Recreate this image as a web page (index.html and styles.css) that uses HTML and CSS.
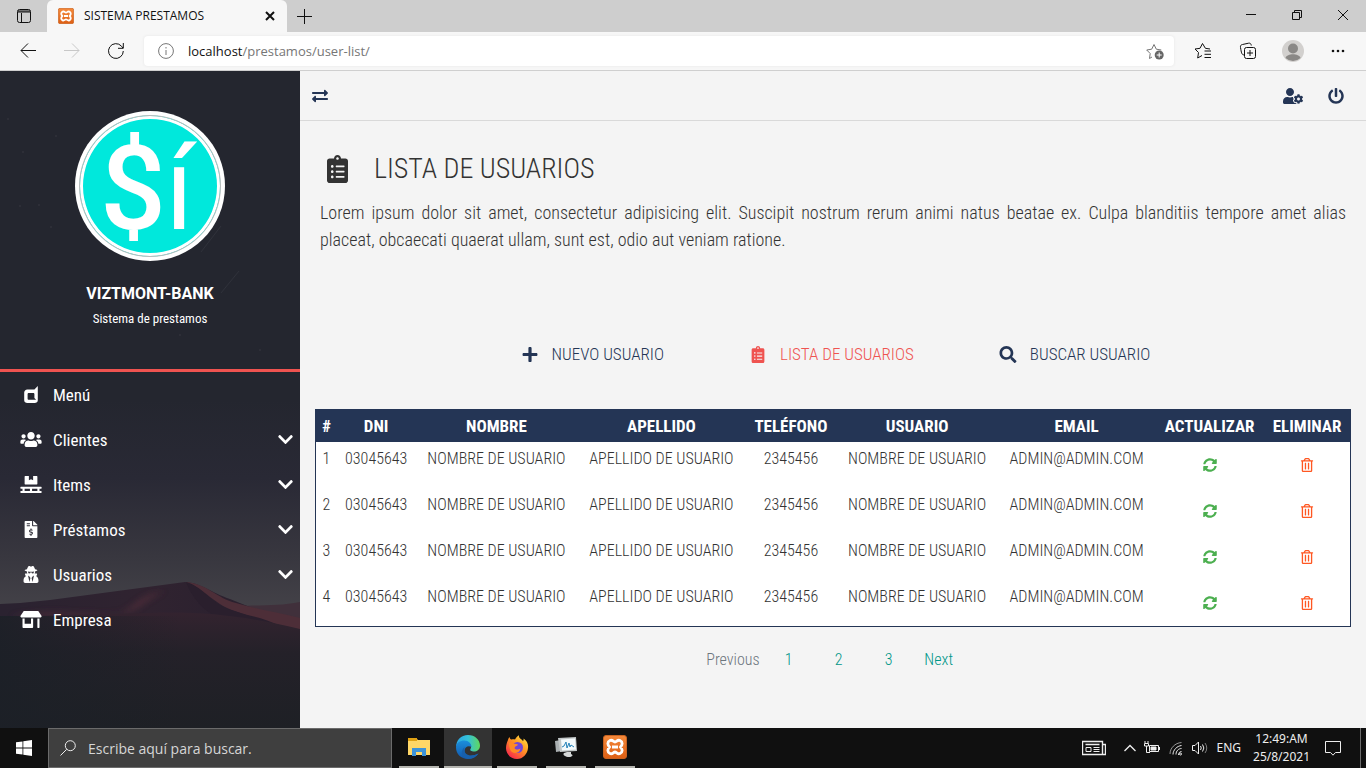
FILE: index.html
```html
<!DOCTYPE html>
<html lang="es">
<head>
<meta charset="utf-8">
<title>SISTEMA PRESTAMOS</title>
<link rel="stylesheet" href="styles.css">
</head>
<body>
<svg class="defs" aria-hidden="true">
  <defs>
    <linearGradient id="xampp-bg" x1="0" y1="0" x2="0" y2="1"><stop offset="0" stop-color="#f58a3c"/><stop offset="1" stop-color="#dd5f14"/></linearGradient>
    <linearGradient id="edge-top" x1="0" y1="0" x2="1" y2="0"><stop offset="0" stop-color="#2aa7e6"/><stop offset=".5" stop-color="#35c1d8"/><stop offset="1" stop-color="#5fd85c"/></linearGradient>
    <linearGradient id="edge-low" x1="0" y1="0" x2="0" y2="1"><stop offset="0" stop-color="#1b8fdc"/><stop offset="1" stop-color="#1257ac"/></linearGradient>
    <linearGradient id="fox" x1="1" y1="0" x2=".2" y2="1"><stop offset="0" stop-color="#fff04a"/><stop offset=".45" stop-color="#ff9a22"/><stop offset="1" stop-color="#f5214d"/></linearGradient>
    <linearGradient id="sky" x1="0" y1="0" x2="0" y2="1"><stop offset="0" stop-color="#24262f"/><stop offset=".5" stop-color="#24262f"/><stop offset=".62" stop-color="#292935"/><stop offset=".74" stop-color="#38373f"/><stop offset=".83" stop-color="#454349"/></linearGradient>
    <linearGradient id="sand" x1="0" y1="0" x2="0" y2="1"><stop offset="0" stop-color="#33232f"/><stop offset=".35" stop-color="#242129"/><stop offset="1" stop-color="#1e2025"/></linearGradient>
    <linearGradient id="sand-left" x1="0" y1="0" x2="1" y2="0"><stop offset="0" stop-color="#1c2027" stop-opacity=".9"/><stop offset=".6" stop-color="#1c2027" stop-opacity="0"/></linearGradient>
    <linearGradient id="ridge" x1="0" y1="0" x2="1" y2="0"><stop offset="0" stop-color="#2a2230"/><stop offset=".5" stop-color="#302330"/><stop offset="1" stop-color="#271f2e"/></linearGradient>
    <filter id="soft"><feGaussianBlur stdDeviation="3"/></filter>
    <symbol id="xampp" viewBox="0 0 24 24"><rect x=".5" y=".5" width="23" height="23" rx="2.5" fill="url(#xampp-bg)" stroke="#c9621f"/><path d="M7 5.500c2.500-1.200 3.400 1.500 5 1.500s2.500-2.700 5-1.500c3 1.400 2.600 4.500.4 6.500 2.200 2 2.600 5.100-.4 6.500-2.500 1.200-3.400-1.500-5-1.500s-2.500 2.700-5 1.500c-3-1.400-2.600-4.500-.4-6.500-2.200-2-2.600-5.100.4-6.500zM9 12h6" fill="none" stroke="#fff" stroke-width="2.800" stroke-linejoin="round"/></symbol>
    <symbol id="clipboard" viewBox="0 0 384 512"><path d="M336 64h-80c0-35.300-28.700-64-64-64s-64 28.700-64 64H48C21.500 64 0 85.500 0 112v352c0 26.500 21.500 48 48 48h288c26.500 0 48-21.500 48-48V112c0-26.500-21.500-48-48-48zM96 424c-13.300 0-24-10.700-24-24s10.700-24 24-24 24 10.700 24 24-10.700 24-24 24zm0-96c-13.300 0-24-10.700-24-24s10.700-24 24-24 24 10.700 24 24-10.700 24-24 24zm0-96c-13.300 0-24-10.700-24-24s10.700-24 24-24 24 10.700 24 24-10.700 24-24 24zm96-192c13.300 0 24 10.700 24 24s-10.700 24-24 24-24-10.700-24-24 10.700-24 24-24zm128 368c0 4.400-3.600 8-8 8H168c-4.400 0-8-3.600-8-8v-16c0-4.400 3.600-8 8-8h144c4.400 0 8 3.600 8 8v16zm0-96c0 4.400-3.600 8-8 8H168c-4.400 0-8-3.600-8-8v-16c0-4.400 3.600-8 8-8h144c4.400 0 8 3.600 8 8v16zm0-96c0 4.400-3.600 8-8 8H168c-4.400 0-8-3.600-8-8v-16c0-4.400 3.600-8 8-8h144c4.400 0 8 3.600 8 8v16z"/></symbol>
    <symbol id="chevron" viewBox="0 0 448 512"><path d="M207.029 381.476L12.686 187.132c-9.373-9.373-9.373-24.569 0-33.941l22.667-22.667c9.357-9.357 24.522-9.375 33.901-.04L224 284.505l154.745-154.021c9.379-9.335 24.544-9.317 33.901.04l22.667 22.667c9.373 9.373 9.373 24.569 0 33.941L240.971 381.476c-9.373 9.372-24.569 9.372-33.942 0z"/></symbol>
    <symbol id="sync" viewBox="0 0 512 512"><path d="M370.720 133.280C339.458 104.008 298.888 87.962 255.848 88c-77.458.068-144.328 53.178-162.791 126.850-1.344 5.363-6.122 9.150-11.651 9.150H24.103c-7.498 0-13.194-6.807-11.807-14.176C33.933 94.924 134.813 8 256 8c66.448 0 126.791 26.136 171.315 68.685L463.030 40.970C478.149 25.851 504 36.559 504 57.941V192c0 13.255-10.745 24-24 24H345.941c-21.382 0-32.090-25.851-16.971-40.971l41.750-41.749zM32 296h134.059c21.382 0 32.090 25.851 16.971 40.971l-41.750 41.750c31.262 29.273 71.835 45.319 114.876 45.280 77.418-.07 144.315-53.144 162.787-126.849 1.344-5.363 6.122-9.150 11.651-9.150h57.304c7.498 0 13.194 6.807 11.807 14.176C478.067 417.076 377.187 504 256 504c-66.448 0-126.791-26.136-171.315-68.685L48.970 471.030C33.851 486.149 8 475.441 8 454.059V320c0-13.255 10.745-24 24-24z"/></symbol>
    <symbol id="trash" viewBox="0 0 448 512"><path d="M268 416h24a12 12 0 0 0 12-12V188a12 12 0 0 0-12-12h-24a12 12 0 0 0-12 12v216a12 12 0 0 0 12 12zM432 80h-82.410l-34-56.700A48 48 0 0 0 274.410 0H173.590a48 48 0 0 0-41.160 23.300L98.410 80H16A16 16 0 0 0 0 96v16a16 16 0 0 0 16 16h16v336a48 48 0 0 0 48 48h288a48 48 0 0 0 48-48V128h16a16 16 0 0 0 16-16V96a16 16 0 0 0-16-16zM171.840 50.910A6 6 0 0 1 177 48h94a6 6 0 0 1 5.150 2.910L293.610 80H154.390zM368 464H80V128h288zm-212-48h24a12 12 0 0 0 12-12V188a12 12 0 0 0-12-12h-24a12 12 0 0 0-12 12v216a12 12 0 0 0 12 12z"/></symbol>
  </defs>
</svg>

<div class="browser">
  <header class="tab-strip">
    <button class="strip-btn tab-actions" aria-label="Acciones de pestañas"><svg class="i16 line" viewBox="0 0 16 16"><rect x="1.500" y="1.500" width="13" height="13" rx="2"/><path d="M2 4h12M2 3h12M5.500 5v9.500"/></svg></button>
    <div class="tab">
      <svg class="i16"><use href="#xampp"/></svg>
      <span class="tab-title">SISTEMA PRESTAMOS</span>
      <button class="tab-close" aria-label="Cerrar pestaña"><svg class="i10 line bold" viewBox="0 0 10 10"><path d="M1 1l8 8M9 1L1 9"/></svg></button>
    </div>
    <button class="strip-btn new-tab" aria-label="Nueva pestaña"><svg class="i16 line" viewBox="0 0 16 16"><path d="M8.500 1v15M1 8.500h15"/></svg></button>
    <div class="window-controls">
      <button aria-label="Minimizar"><svg class="i10 line" viewBox="0 0 10 10"><path d="M0 4.500h10"/></svg></button>
      <button aria-label="Restaurar"><svg class="i10 line" viewBox="0 0 10 10"><path d="M.5 2.500h7v7h-7zM2.500 2.500v-2h7v7h-2"/></svg></button>
      <button aria-label="Cerrar"><svg class="i10 line" viewBox="0 0 10 10"><path d="M0 0l10 10M10 0L0 10"/></svg></button>
    </div>
  </header>

  <div class="toolbar">
    <button aria-label="Atrás"><svg class="i16 line" viewBox="0 0 16 16"><path d="M16 7.500H1M8 .5L1 7.500l7 7"/></svg></button>
    <button class="disabled" aria-label="Adelante" disabled><svg class="i16 line" viewBox="0 0 16 16"><path d="M0 7.500h15M8 .5l7 7-7 7"/></svg></button>
    <button aria-label="Actualizar página"><svg class="i16 line" viewBox="0 0 16 16"><path d="M15.300 8A7.400 7.400 0 1 1 13.500 3.200L15 5M15.300 0v5.300H10"/></svg></button>
    <div class="address">
      <svg class="i16 line grey" viewBox="0 0 16 16"><circle cx="8" cy="8" r="7.400"/><path d="M8 7v5M8 4v1.500"/></svg>
      <span class="url">localhost<span>/prestamos/user-list/</span></span>
      <button aria-label="Agregar a favoritos"><svg class="i18 line grey" viewBox="0 0 18 18"><path d="M6 15l-2.500 1.500.7-5L.7 8l5-.8L8 2.500l2.300 4.700 5 .8"/><circle cx="13.200" cy="13" r="4.500" fill="#666" stroke="none"/><path d="M13.200 10.500v5M10.700 13h5" stroke="#fff"/></svg></button>
    </div>
    <div class="tool-group">
      <button aria-label="Favoritos"><svg class="i18 line" viewBox="0 0 18 18"><path d="M16 7l-4.600-.7L8.500 1.500 6 6.300l-5 .7 3.500 3.500-.8 5.500L8 13.500M10.500 9H17M10.500 12.300H17M10.500 15.500H17"/></svg></button>
      <button aria-label="Colecciones"><svg class="i18 line" viewBox="0 0 18 18"><path d="M5 13C2.500 12.500 2.500 11 1.500 5.500 1.200 3.500 2 2.800 3.500 2.500L9.500 1.200c1.500-.3 2.500.3 2.800 2.300"/><rect x="5.500" y="5.500" width="11" height="11" rx="2"/><path d="M11 8v6M8 11h6"/></svg></button>
      <button aria-label="Perfil"><svg class="i22" viewBox="0 0 22 22"><circle cx="11" cy="11" r="11" fill="#d2d0ce"/><circle cx="11" cy="8.500" r="5" fill="#8a8886"/><path d="M3.500 18c1.500-5 13.500-5 15 0A11 11 0 0 1 3.500 18z" fill="#8a8886"/></svg></button>
      <button aria-label="Configuración y más"><svg class="i16" viewBox="0 0 16 16"><circle cx="3" cy="8" r="1.300"/><circle cx="8" cy="8" r="1.300"/><circle cx="13" cy="8" r="1.300"/></svg></button>
    </div>
  </div>

  <div class="page">
    <aside class="sidebar">
      <svg class="desert" viewBox="0 0 300 657" preserveAspectRatio="none" aria-hidden="true">
        <rect width="300" height="657" fill="url(#sky)"/>
        <path d="M201 181l20-26M221 222l18-22" stroke="#30323b"/>
        <g fill="#30323b"><circle cx="8" cy="48" r="1"/><circle cx="56" cy="65" r="1"/><circle cx="23" cy="81" r="1"/><circle cx="20" cy="135" r="1"/><circle cx="39" cy="134" r="1"/><circle cx="51" cy="156" r="1"/><circle cx="180" cy="264" r="1"/><circle cx="260" cy="279" r="1"/></g>
        <path d="M240 535c25-1 40 0 60-4v30h-60z" fill="#40303b"/>
        <path d="M0 533l20-1 30-3 90-12 45-6c16 1 25 10 45 17l30 12 40 10v20H0z" fill="url(#ridge)"/>
        <path d="M186 511c22 2 30 16 50 21 20 6 40 9 64 15v12c-25-5-45-12-65-19-20-6-30-22-49-29z" fill="#4d2e38"/>
        <path d="M186 511c16 4 24 20 42 27 15 6 35 8 52 17l-60-8c-16-6-28-20-34-36z" fill="#2a1f2d"/>
        <path d="M10 546c40-10 80 0 110-4 15-5 17-18 45-22-20 8-20 16-40 22-35 6-80 2-115 4z" fill="#5a303c" opacity=".7" filter="url(#soft)"/>
        <path d="M0 547c50-3 100-4 150-5 55-2 100 4 150 16v99H0z" fill="url(#sand)"/>
        <path d="M0 545h300v112H0z" fill="url(#sand-left)"/>
      </svg>
      <div class="profile">
        <div class="avatar"><div class="avatar-disc">$<span>í</span></div></div>
        <p class="brand">VIZTMONT-BANK</p>
        <p class="tagline">Sistema de prestamos</p>
      </div>
      <nav class="menu">
        <a href="#"><svg class="menu-icon" viewBox="0 0 448 512"><path d="M326.600 104H110.400c-51.100 0-91.200 43.300-91.200 93.500V427c0 50.500 40.100 85 91.200 85h227.200c51.100 0 91.200-34.500 91.200-85V0L326.600 104zM153.900 416.500c-17.700 0-32.400-15.100-32.400-32.800V240.800c0-17.700 14.700-32.500 32.400-32.500h140.700c17.700 0 32 14.800 32 32.500v123.500l51.100 52.300H153.900z"/></svg><span>Menú</span></a>
        <a href="#"><svg class="menu-icon" viewBox="0 0 640 512"><path d="M96 224c35.300 0 64-28.700 64-64s-28.700-64-64-64-64 28.700-64 64 28.700 64 64 64zm448 0c35.300 0 64-28.700 64-64s-28.700-64-64-64-64 28.700-64 64 28.700 64 64 64zm32 32h-64c-17.600 0-33.500 7.100-45.100 18.600 40.300 22.100 68.900 62 75.100 109.400h66c17.700 0 32-14.300 32-32v-32c0-35.300-28.700-64-64-64zm-256 0c61.900 0 112-50.100 112-112S381.900 32 320 32 208 82.100 208 144s50.100 112 112 112zm76.800 32h-8.300c-20.800 10-43.900 16-68.500 16s-47.600-6-68.500-16h-8.300C179.600 288 128 339.600 128 403.200V432c0 26.500 21.500 48 48 48h288c26.500 0 48-21.500 48-48v-28.800c0-63.600-51.600-115.200-115.200-115.200zm-223.700-13.400C161.500 263.100 145.600 256 128 256H64c-35.300 0-64 28.700-64 64v32c0 17.700 14.300 32 32 32h65.900c6.300-47.400 34.900-87.300 75.200-109.400z"/></svg><span>Clientes</span><svg class="caret"><use href="#chevron"/></svg></a>
        <a href="#"><svg class="menu-icon" viewBox="0 0 640 512"><path d="M144 256h352c8.800 0 16-7.200 16-16V16c0-8.800-7.200-16-16-16H384v128l-64-32-64 32V0H144c-8.800 0-16 7.200-16 16v224c0 8.800 7.200 16 16 16zm480 128c8.800 0 16-7.200 16-16v-32c0-8.800-7.200-16-16-16H16c-8.800 0-16 7.200-16 16v32c0 8.800 7.200 16 16 16h48v64H16c-8.800 0-16 7.200-16 16v32c0 8.800 7.200 16 16 16h608c8.800 0 16-7.200 16-16v-32c0-8.800-7.200-16-16-16h-48v-64h48zm-336 64H128v-64h160v64zm224 0H352v-64h160v64z"/></svg><span>Items</span><svg class="caret"><use href="#chevron"/></svg></a>
        <a href="#"><svg class="menu-icon" viewBox="0 0 384 512"><path d="M377 105L279.100 7c-4.500-4.500-10.600-7-17-7H256v128h128v-6.100c0-6.300-2.500-12.400-7-16.900zm-153 31V0H24C10.700 0 0 10.700 0 24v464c0 13.300 10.700 24 24 24h336c13.300 0 24-10.700 24-24V160H248c-13.200 0-24-10.800-24-24zM64 72c0-4.420 3.580-8 8-8h80c4.420 0 8 3.580 8 8v16c0 4.420-3.580 8-8 8H72c-4.420 0-8-3.580-8-8V72zm0 80v-16c0-4.420 3.580-8 8-8h80c4.420 0 8 3.580 8 8v16c0 4.420-3.580 8-8 8H72c-4.420 0-8-3.580-8-8zm144 263.880V440c0 4.420-3.580 8-8 8h-16c-4.420 0-8-3.580-8-8v-24.290c-11.290-.58-22.270-4.520-31.370-11.350-3.900-2.930-4.100-8.770-.57-12.140l11.750-11.210c2.770-2.640 6.890-2.760 10.130-.73 3.870 2.420 8.260 3.720 12.820 3.720h28.110c6.500 0 11.800-5.920 11.800-13.190 0-5.950-3.610-11.190-8.770-12.730l-45-13.500c-18.590-5.580-31.580-23.420-31.580-43.390 0-24.520 19.050-44.440 42.670-45.070V232c0-4.420 3.580-8 8-8h16c4.420 0 8 3.580 8 8v24.290c11.290.58 22.270 4.510 31.370 11.350 3.900 2.930 4.100 8.770.57 12.140l-11.750 11.210c-2.770 2.640-6.890 2.760-10.130.73-3.870-2.430-8.260-3.720-12.820-3.720h-28.110c-6.500 0-11.800 5.920-11.800 13.190 0 5.950 3.610 11.190 8.770 12.730l45 13.500c18.590 5.580 31.580 23.420 31.580 43.390 0 24.530-19.050 44.440-42.670 45.070z"/></svg><span>Préstamos</span><svg class="caret"><use href="#chevron"/></svg></a>
        <a href="#"><svg class="menu-icon" viewBox="0 0 448 512"><path d="M383.900 308.300l23.900-62.600c4-10.500-3.700-21.700-15-21.700h-58.500c11-18.900 17.800-40.600 17.800-64v-.3c39.200-7.800 64-19.100 64-31.700 0-13.300-27.300-25.100-70.100-33-9.200-32.800-27-65.800-40.600-82.800-9.500-11.900-25.900-15.600-39.500-8.800l-27.600 13.800c-9 4.500-19.600 4.500-28.600 0L182.100 3.400c-13.600-6.800-30-3.100-39.500 8.800-13.500 17-31.400 50-40.600 82.800-42.700 7.900-70 19.700-70 33 0 12.600 24.800 23.900 64 31.700v.3c0 23.400 6.800 45.100 17.800 64H56.300c-11.500 0-19.200 11.700-14.700 22.300l25.800 60.200C27.300 329.800 0 372.700 0 422.400v44.800C0 491.900 20.100 512 44.800 512h358.400c24.700 0 44.800-20.100 44.800-44.800v-44.800c0-48.400-25.800-90.400-64.100-114.100zM176 480l-41.600-192 49.600 32 24 40-32 120zm96 0l-32-120 24-40 49.600-32L272 480zm41.700-298.500c-3.900 11.900-7 24.600-16.500 33.400-10.100 9.300-48 22.400-64-25-2.800-8.400-15.400-8.400-18.300 0-17 50.200-56 32.400-64 25-9.500-8.800-12.700-21.500-16.500-33.400-.8-2.500-6.300-5.700-6.300-5.800v-10.800c28.300 3.600 61 5.800 96 5.800s67.700-2.100 96-5.800v10.800c-.1.1-5.600 3.200-6.400 5.800z"/></svg><span>Usuarios</span><svg class="caret"><use href="#chevron"/></svg></a>
        <a href="#"><svg class="menu-icon" viewBox="0 0 640 512"><path d="M320 384H128V224H64v256c0 17.700 14.300 32 32 32h256c17.700 0 32-14.300 32-32V224h-64v160zm314.600-241.800l-85.300-128c-6-8.900-16-14.200-26.700-14.200H117.400c-10.700 0-20.700 5.300-26.600 14.200l-85.300 128c-14.200 21.300 1 49.800 26.600 49.800H608c25.500 0 40.700-28.500 26.600-49.800zM512 496c0 8.800 7.200 16 16 16h32c8.800 0 16-7.200 16-16V224h-64v272z"/></svg><span>Empresa</span></a>
      </nav>
    </aside>

    <main class="content">
      <div class="topbar">
        <button aria-label="Mostrar u ocultar menú"><svg class="i16" viewBox="0 0 512 512"><path d="M0 168v-16c0-13.255 10.745-24 24-24h360V80c0-21.367 25.899-32.042 40.971-16.971l80 80c9.372 9.373 9.372 24.569 0 33.941l-80 80C409.956 271.982 384 261.456 384 240v-48H24c-13.255 0-24-10.745-24-24zm488 152H128v-48c0-21.314-25.862-32.080-40.971-16.971l-80 80c-9.372 9.373-9.372 24.569 0 33.941l80 80C102.057 463.997 128 453.437 128 432v-48h360c13.255 0 24-10.745 24-24v-16c0-13.255-10.745-24-24-24z"/></svg></button>
        <div class="topbar-right">
          <a href="#" aria-label="Mi cuenta"><svg class="wide" viewBox="0 0 640 512"><path d="M610.500 373.300c2.600-14.100 2.600-28.500 0-42.600l25.800-14.900c3-1.700 4.300-5.200 3.300-8.500-6.700-21.600-18.200-41.200-33.200-57.400-2.300-2.500-6-3.100-9-1.400l-25.800 14.900c-10.900-9.300-23.400-16.500-36.900-21.300v-29.800c0-3.400-2.400-6.400-5.700-7.100-22.300-5-45-4.800-66.200 0-3.300.7-5.700 3.700-5.700 7.100v29.800c-13.500 4.800-26 12-36.900 21.300l-25.800-14.900c-2.900-1.700-6.700-1.100-9 1.400-15 16.200-26.500 35.800-33.200 57.400-1 3.300.4 6.800 3.300 8.500l25.800 14.900c-2.600 14.100-2.600 28.500 0 42.600l-25.800 14.900c-3 1.700-4.300 5.200-3.300 8.500 6.700 21.600 18.200 41.100 33.200 57.400 2.300 2.500 6 3.100 9 1.400l25.800-14.900c10.900 9.300 23.400 16.500 36.900 21.300v29.800c0 3.400 2.400 6.400 5.700 7.100 22.300 5 45 4.800 66.200 0 3.300-.7 5.700-3.700 5.700-7.100v-29.800c13.500-4.800 26-12 36.900-21.300l25.800 14.900c2.900 1.700 6.700 1.100 9-1.400 15-16.200 26.500-35.800 33.200-57.400 1-3.300-.4-6.800-3.300-8.500l-25.800-14.900zM496 400.500c-26.800 0-48.500-21.800-48.500-48.500s21.800-48.500 48.500-48.500 48.500 21.800 48.500 48.500-21.700 48.500-48.500 48.500zM224 256c70.700 0 128-57.300 128-128S294.700 0 224 0 96 57.300 96 128s57.300 128 128 128zm201.200 226.500c-2.300-1.200-4.600-2.600-6.800-3.900l-7.900 4.600c-6 3.400-12.800 5.300-19.600 5.300-10.900 0-21.400-4.600-28.900-12.600-18.300-19.800-32.300-43.900-40.200-69.600-5.500-17.700 1.900-36.400 17.900-45.700l7.900-4.600c-.1-2.600-.1-5.200 0-7.800l-7.900-4.600c-16-9.200-23.400-28-17.900-45.700.9-2.900 2.200-5.800 3.200-8.700-3.800-.3-7.500-1.200-11.400-1.200h-16.700c-22.200 10.200-46.900 16-72.900 16s-50.600-5.800-72.900-16h-16.700C60.200 288 0 348.200 0 422.400V464c0 26.500 21.500 48 48 48h352c10.100 0 19.500-3.200 27.200-8.500-1.200-3.800-2-7.700-2-11.800v-9.200z"/></svg></a>
          <a href="#" aria-label="Salir"><svg class="i16" viewBox="0 0 512 512"><path d="M400 54.100c63 45 104 118.600 104 201.900 0 136.800-110.800 247.700-247.500 248C120 504.300 8.200 393 8 256.400 7.900 173.100 48.900 99.300 111.800 54.200c11.700-8.300 28-4.800 35 7.700L162.600 90c5.900 10.500 3.100 23.800-6.600 31-41.500 30.800-68 79.600-68 134.900-.1 92.300 74.500 168.100 168 168.100 91.600 0 168.600-74.200 168-169.100-.3-51.800-24.700-101.800-68.100-134-9.700-7.200-12.400-20.500-6.500-30.900l15.800-28.100c7-12.400 23.200-16.100 34.800-7.800zM296 264V24c0-13.300-10.700-24-24-24h-32c-13.300 0-24 10.700-24 24v240c0 13.300 10.700 24 24 24h32c13.300 0 24-10.700 24-24z"/></svg></a>
        </div>
      </div>

      <section class="intro">
        <h1><svg class="title-icon"><use href="#clipboard"/></svg><span>LISTA DE USUARIOS</span></h1>
        <p>Lorem ipsum dolor sit amet, consectetur adipisicing elit. Suscipit nostrum rerum animi natus beatae ex. Culpa blanditiis tempore amet alias placeat, obcaecati quaerat ullam, sunt est, odio aut veniam ratione.</p>
      </section>

      <nav class="page-tabs">
        <a href="#"><svg class="fw" viewBox="0 0 448 512"><path d="M416 208H272V64c0-17.670-14.330-32-32-32h-32c-17.670 0-32 14.330-32 32v144H32c-17.670 0-32 14.330-32 32v32c0 17.670 14.330 32 32 32h144v144c0 17.670 14.330 32 32 32h32c17.670 0 32-14.330 32-32V304h144c17.670 0 32-14.330 32-32v-32c0-17.670-14.330-32-32-32z"/></svg><span>NUEVO USUARIO</span></a>
        <a href="#" class="active"><svg class="fw"><use href="#clipboard"/></svg><span>LISTA DE USUARIOS</span></a>
        <a href="#"><svg class="fw" viewBox="0 0 512 512"><path d="M505 442.700L405.300 343c-4.500-4.500-10.600-7-17-7H372c27.600-35.300 44-79.700 44-128C416 93.100 322.900 0 208 0S0 93.100 0 208s93.100 208 208 208c48.300 0 92.700-16.400 128-44v16.300c0 6.400 2.500 12.500 7 17l99.700 99.700c9.400 9.400 24.600 9.400 33.900 0l28.300-28.300c9.400-9.400 9.400-24.600.1-34zM208 336c-70.700 0-128-57.200-128-128 0-70.700 57.200-128 128-128 70.700 0 128 57.200 128 128 0 70.700-57.200 128-128 128z"/></svg><span>BUSCAR USUARIO</span></a>
      </nav>

      <div class="table-wrap">
        <table>
          <thead><tr><th>#</th><th>DNI</th><th>NOMBRE</th><th>APELLIDO</th><th>TELÉFONO</th><th>USUARIO</th><th>EMAIL</th><th>ACTUALIZAR</th><th>ELIMINAR</th></tr></thead>
          <tbody>
            <tr><td>1</td><td>03045643</td><td>NOMBRE DE USUARIO</td><td>APELLIDO DE USUARIO</td><td>2345456</td><td>NOMBRE DE USUARIO</td><td>ADMIN@ADMIN.COM</td><td><a href="#" class="action update" aria-label="Actualizar"><svg><use href="#sync"/></svg></a></td><td><button class="action delete" aria-label="Eliminar"><svg><use href="#trash"/></svg></button></td></tr>
            <tr><td>2</td><td>03045643</td><td>NOMBRE DE USUARIO</td><td>APELLIDO DE USUARIO</td><td>2345456</td><td>NOMBRE DE USUARIO</td><td>ADMIN@ADMIN.COM</td><td><a href="#" class="action update" aria-label="Actualizar"><svg><use href="#sync"/></svg></a></td><td><button class="action delete" aria-label="Eliminar"><svg><use href="#trash"/></svg></button></td></tr>
            <tr><td>3</td><td>03045643</td><td>NOMBRE DE USUARIO</td><td>APELLIDO DE USUARIO</td><td>2345456</td><td>NOMBRE DE USUARIO</td><td>ADMIN@ADMIN.COM</td><td><a href="#" class="action update" aria-label="Actualizar"><svg><use href="#sync"/></svg></a></td><td><button class="action delete" aria-label="Eliminar"><svg><use href="#trash"/></svg></button></td></tr>
            <tr><td>4</td><td>03045643</td><td>NOMBRE DE USUARIO</td><td>APELLIDO DE USUARIO</td><td>2345456</td><td>NOMBRE DE USUARIO</td><td>ADMIN@ADMIN.COM</td><td><a href="#" class="action update" aria-label="Actualizar"><svg><use href="#sync"/></svg></a></td><td><button class="action delete" aria-label="Eliminar"><svg><use href="#trash"/></svg></button></td></tr>
          </tbody>
        </table>
      </div>

      <nav class="pagination" aria-label="Paginación">
        <a class="off" aria-disabled="true">Previous</a><a href="#">1</a><a href="#">2</a><a href="#">3</a><a href="#">Next</a>
      </nav>
    </main>
  </div>

  <footer class="taskbar">
    <button class="start" aria-label="Inicio"><svg class="i16" viewBox="0 0 16 16"><path fill="#fff" d="M0 2.300L6.500 1.400v6.200H0zM7.300 1.300L16 0v7.600H7.300zM0 8.400h6.500v6.200L0 13.700zM7.300 8.400H16V16l-8.700-1.300z"/></svg></button>
    <label class="search"><svg class="i16 line" viewBox="0 0 16 16"><circle cx="10.300" cy="5.700" r="5"/><path d="M6.700 9.300L.5 15.500"/></svg><input type="text" aria-label="Buscar" placeholder="Escribe aquí para buscar."></label>
    <div class="apps">
      <button aria-label="Explorador de archivos"><svg class="i24" viewBox="0 0 24 24"><path d="M1 3h8l2 2h12v15H1z" fill="#ffd767"/><path d="M1 3h9v3H1z" fill="#e0a214"/><path d="M5 21v-8h14v8h-4v-4H9v4z" fill="#3d93d8"/></svg></button>
      <button class="current" aria-label="Microsoft Edge"><svg class="i24" viewBox="0 0 24 24"><path d="M12 0c7 0 12 5 12 10.500 0 4-3 6-6 6-2.500 0-4.500-1-3.500-2.500 2-3-1-7-5.500-7C4 7 0 10 0 13 0 5 5 0 12 0z" fill="url(#edge-top)"/><path d="M0 12.500C0 8 4 5.500 8.500 5.500c4 0 7 3 7 6.500-3-2-7 0-7 4 0 4 5 7 14 2.500C20 22 16 24 12 24 5 24 0 19 0 12.500z" fill="url(#edge-low)"/><path d="M8.500 15c0 5 6 7.500 14 3.500-3 5-9 6.500-13.500 4.500-4-2-4.500-7-.5-11z" fill="#1760ad"/></svg></button>
      <button aria-label="Firefox"><svg class="i24" viewBox="0 0 24 24"><path d="M3 5c.3-1.500 1-2.500 1.500-3 .3 1.500 1 2.200 1.800 2.600C8 4 9 4 10 4.500 11 2 13 .8 14 .2c-.3 2 .5 3 2.200 4 1 .6 1.500 1.200 1.800 2 .5-.8.700-1.800.6-2.700C22 6 23.500 9 23 13c-.5 6-5 11-11 11S.8 19 1 13c0-3.500 1-5.500 2-8z" fill="url(#fox)"/><circle cx="12.500" cy="12.500" r="5.500" fill="#7146d8"/><path d="M4 8c2-1.500 4-.5 5.500.8 1.200.2 2.500.2 3.500.7-.3 1.500-3 1.500-3.500 3.500 1 2 4 2 6 .5-.5 3-3 4.500-5.500 4.500C6 18 4 14 4 8z" fill="#ff8a24"/></svg></button>
      <button aria-label="Monitor del sistema"><svg class="i24" viewBox="0 0 24 24"><path d="M1 6l6-1 1 11-6 1z" fill="#aab0b2"/><path d="M4 3l18-1 1 14-17 1z" fill="#c3c8c9"/><path d="M7 4.500l14-1 1 11-14 1z" fill="#f4fafc"/><path d="M8 12l2-1 2-4 1 6 2-5 1 4 1-2 3 2" fill="none" stroke="#2582b9"/><path d="M10 18l3-1h4v2c3 1 1 3-2 3s-7-2-5-4z" fill="#d5d8d8"/></svg></button>
      <button aria-label="XAMPP"><svg class="i24"><use href="#xampp"/></svg></button>
    </div>
    <div class="tray">
      <button class="news" aria-label="Noticias"><svg class="i24 line" viewBox="0 0 24 24"><path d="M.5 5.500h20v13h-20zM20.500 8.500h3v10h-3M3.500 8.500h14" stroke-width="1.400"/><path d="M4 11.500h5v4H4zM11.500 11.500h6M11.500 13.500h6M11.500 15.500h6"/></svg></button>
      <button aria-label="Mostrar iconos ocultos"><svg class="i12 line" viewBox="0 0 12 12"><path d="M.5 9L6 3.500 11.500 9" stroke-width="1.300"/></svg></button>
      <svg class="i16 line" viewBox="0 0 16 16" aria-label="Batería"><path d="M5.500 5.500h9v6h-9zM15.500 7v3M1 1v2M4 1v2M.5 3.500h4v2.500h-4zM2.500 6v6.500H6"/><path d="M7 7h5v3H7z" fill="#eee"/></svg>
      <svg class="i16 line" viewBox="0 0 16 16" aria-label="Red"><path d="M2 14C2 8 7 3 13.500 2.500" opacity=".6"/><path d="M5 14.500C5 10 9 6 13.500 5.500M8 14.500c0-3.500 2.500-6 5.500-6M10.500 15c0-2 1.200-3.500 3-3.500"/><circle cx="12.500" cy="14" r="1"/></svg>
      <svg class="i16 line" viewBox="0 0 16 16" aria-label="Volumen"><path d="M.5 5.500h2.500L6.500 2v12L3 10.500H.5zM8.500 6q1.500 2 0 4M10.500 4.500q2.700 3.500 0 7"/><path d="M13 3q3.500 5 0 10" opacity=".5"/></svg>
      <span class="lang">ENG</span>
      <div class="clock"><span>12:49:AM</span><span>25/8/2021</span></div>
      <button class="notices" aria-label="Notificaciones"><svg class="i16 line" viewBox="0 0 16 16"><path d="M.5 1.500h15v11h-5L8 15.200 5.500 12.500h-5z"/></svg></button>
    </div>
  </footer>
</div>
</body>
</html>
```
FILE: styles.css
```css
* { box-sizing: border-box; }
body { margin: 0; font-family: "Roboto Condensed", Roboto, sans-serif; font-size: 16px; line-height: 24px; color: #333; }
button { border: 0; padding: 0; margin: 0; background: none; color: inherit; font: inherit; display: flex; align-items: center; justify-content: center; }
a { color: inherit; text-decoration: none; }
svg { fill: currentColor; flex: none; display: block; }
p, h1 { margin: 0; }
.defs { position: absolute; width: 0; height: 0; }
.i10 { width: 10px; height: 10px; }
.i12 { width: 12px; height: 12px; }
.i16 { width: 16px; height: 16px; }
.i18 { width: 18px; height: 18px; }
.i22 { width: 22px; height: 22px; }
.i24 { width: 24px; height: 24px; }
.line { fill: none; stroke: currentColor; }
.bold { stroke-width: 2; }
.grey { color: #767676; }

.browser { display: flex; flex-direction: column; min-height: 100vh; }

/* Browser chrome */
.tab-strip { display: flex; height: 32px; background: #cecece; color: #111; font-family: "Noto Sans", sans-serif; font-size: 12px; }
.strip-btn { width: 34px; }
.tab-actions { width: 47px; }
.tab { display: flex; align-items: center; width: 240px; padding: 0 12px 0 11px; background: #f7f7f7; border-radius: 6px 6px 0 0; }
.tab-title { flex: 1; margin-left: 10px; font-family: "Open Sans", sans-serif; }
.window-controls { display: flex; margin-left: auto; }
.window-controls button { width: 46px; height: 29px; }
.toolbar { display: flex; align-items: center; height: 39px; padding: 0 6px; background: #f7f7f7; border-bottom: 1px solid #cfcfcf; color: #111; }
.toolbar > button { width: 44px; height: 32px; }
.disabled { color: #c8c8c8; }
.address { flex: 1; display: flex; align-items: center; height: 30px; margin-left: 6px; padding: 0 10px 0 14px; background: #fff; border-radius: 4px; box-shadow: 0 0 3px #e4e4e4; }
.url { flex: 1; margin-left: 14px; font-family: "Open Sans", sans-serif; font-size: 13px; color: #111; }
.url span { color: #767676; }
.tool-group { display: flex; margin-left: 6px; }
.tool-group button { width: 45px; }

/* Page */
.page { flex: 1; display: flex; background: #f4f4f4; }
.sidebar { position: relative; width: 300px; flex: none; color: #fff; background: #24262f; }
.desert { position: absolute; inset: 0; width: 100%; height: 100%; }
.profile { position: relative; padding: 40px 0 38px; border-bottom: 3px solid #ef5350; text-align: center; }
.avatar { width: 150px; height: 150px; margin: 0 auto 21px; padding: 4px; border-radius: 50%; background: #fff; }
.avatar-disc { height: 142px; padding-right: 7px; border: 1px solid #bbb; border-radius: 50%; background: #00e8dc; box-shadow: inset 0 0 0 3px #fff; font-family: Roboto, sans-serif; font-size: 116px; font-weight: 500; line-height: 146px; white-space: nowrap; }
.avatar-disc span { font-family: "Roboto Condensed", Roboto, sans-serif; font-weight: 400; }
.brand { font-family: Roboto, sans-serif; font-weight: 700; }
.tagline { margin-top: 1px; font-size: 13px; }
.menu { position: relative; }
.menu a { display: flex; align-items: center; height: 45px; padding: 0 7px 0 20px; font-size: 17px; }
.menu span { flex: 1; margin-left: 11px; }
.menu-icon { width: 22px; height: 17px; }
.caret { width: 15px; height: 17px; }

.content { flex: 1; min-width: 0; }
.topbar { display: flex; align-items: center; justify-content: space-between; height: 50px; padding: 0 22px 0 12px; border-bottom: 1px solid #d9d9d9; color: #243555; }
.topbar-right { display: flex; align-items: center; gap: 25px; }
.wide { width: 20px; height: 16px; }
.intro { padding: 31px 20px 0; }
.intro h1 { display: flex; align-items: center; height: 34px; font-size: 28px; font-weight: 300; }
.title-icon { width: 35px; height: 28px; }
.intro h1 span { margin-left: 19px; }
.intro p { margin-top: 13px; font-size: 18px; font-weight: 300; line-height: 27px; text-align: justify; }
.page-tabs { display: flex; justify-content: center; gap: 84px; margin-top: 89px; padding-left: 4px; color: #243555; font-size: 17px; font-weight: 300; }
.page-tabs a { display: flex; align-items: center; gap: 12px; }
.page-tabs .active { color: #ef5350; }
.fw { width: 20px; height: 17px; }

.table-wrap { margin: 43px 15px 0; }
table { width: 100%; border-collapse: collapse; border: 1px solid #243555; background: #fff; font-weight: 300; text-align: center; white-space: nowrap; }
th { padding: 4px 5px; background: #243555; color: #fff; font-size: 17px; font-weight: 700; }
td { padding: 5px; vertical-align: top; }
.action { display: flex; align-items: center; justify-content: center; width: 100%; height: 36px; }
.action svg { width: 14px; height: 14px; }
.update { color: #4caf50; }
.delete { color: #ff5722; }

.pagination { display: flex; justify-content: center; margin-top: 21px; font-weight: 300; color: #009688; }
.pagination a { min-width: 50px; padding: 0 4px; text-align: center; }
.pagination .off { color: #6c757d; }

/* Taskbar */
.taskbar { display: flex; height: 40px; background: #101010; color: #eee; font-family: "Noto Sans", sans-serif; }
.start { width: 48px; }
.search { display: flex; align-items: center; width: 344px; padding: 0 11px; gap: 12px; background: #3f3f3f; border: 1px solid #6b6b6b; }
.search input { flex: 1; min-width: 0; border: 0; padding: 0; background: none; outline: 0; font-family: "Open Sans", sans-serif; font-size: 14px; color: #eee; }
.search input::placeholder { color: #d6d6d6; opacity: 1; }
.apps { display: flex; gap: 9px; margin-left: 7px; }
.apps button { width: 40px; border-bottom: 2px solid #b5b5b0; }
.apps .current { width: 48px; margin: 0 -4px; background: #333; }
.tray { display: flex; align-items: center; margin-left: auto; gap: 8px; padding-right: 5px; font-size: 12px; }
.news { margin-right: 10px; }
.clock { display: flex; flex-direction: column; align-items: center; line-height: 18px; margin-left: 4px; }
.notices { width: 55px; height: 40px; border-right: 1px solid #6b6b6b; margin-left: -12px; }
```
